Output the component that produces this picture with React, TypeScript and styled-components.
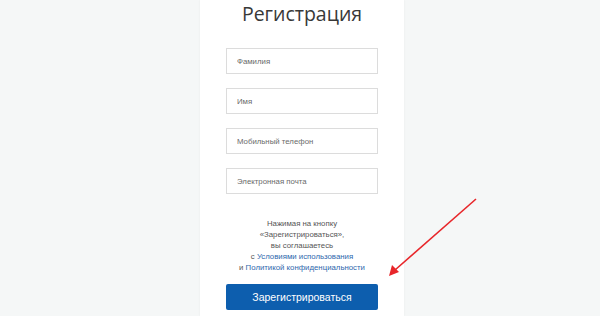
import styled, { createGlobalStyle } from "styled-components"

const Global = createGlobalStyle`
    html, body {
        margin: 0;
        padding: 0;
        background: #f5f7f7;
    }
    body {
        font-family: "Liberation Sans", Arial, sans-serif;
    }
`

const Page = styled.div`
    position: relative;
    width: 600px;
    height: 316px;
    overflow: hidden;
    display: flex;
    padding-left: 200px;
    box-sizing: border-box;
`

const Card = styled.div`
    width: 204px;
    height: 316px;
    background: #ffffff;
    box-shadow: 0 0 2px rgba(0, 0, 0, 0.06);
    display: flex;
    flex-direction: column;
    align-items: center;
    box-sizing: border-box;
`

const Title = styled.h1`
    margin: 0;
    height: 48px;
    font-family: "Open Sans", sans-serif;
    font-weight: 400;
    font-size: 19.5px;
    line-height: 28px;
    color: #383838;
`

const Fields = styled.div`
    display: flex;
    flex-direction: column;
    gap: 14px;
`

const Field = styled.input`
    width: 152px;
    height: 26px;
    box-sizing: border-box;
    border: 1px solid #dcdcdc;
    border-radius: 0;
    padding: 0 10px;
    font-family: "Liberation Sans", Arial, sans-serif;
    font-size: 7.8px;
    color: #333;
    outline: none;
    &::placeholder {
        color: #6a6a6a;
    }
`

const Terms = styled.p`
    margin: 24px 0 0;
    font-size: 7.8px;
    line-height: 11px;
    color: #555;
    text-align: center;
`

const Link = styled.a`
    color: #2e67ad;
    text-decoration: none;
`

const Submit = styled.button`
    margin-top: 11px;
    width: 152px;
    height: 26px;
    border: none;
    border-radius: 2px;
    background: #0d5eae;
    color: #ffffff;
    font-family: "Liberation Sans", Arial, sans-serif;
    font-size: 10.5px;
`

const Arrow = styled.svg`
    position: absolute;
    left: 0;
    top: 0;
    pointer-events: none;
`

export default function App() {
    return (
        <Page>
            <Global />
            <Card>
                <Title>Регистрация</Title>
                <Fields>
                    <Field placeholder="Фамилия" />
                    <Field placeholder="Имя" />
                    <Field placeholder="Мобильный телефон" />
                    <Field placeholder="Электронная почта" />
                </Fields>
                <Terms>
                    Нажимая на кнопку
                    <br />
                    «Зарегистрироваться»,
                    <br />
                    вы соглашаетесь
                    <br />
                    с <Link href="#">Условиями использования</Link>
                    <br />
                    и <Link href="#">Политикой конфиденциальности</Link>
                </Terms>
                <Submit>Зарегистрироваться</Submit>
            </Card>
            <Arrow width="600" height="316" viewBox="0 0 600 316">
                <line x1="476" y1="199" x2="395" y2="270" stroke="#e8262a" strokeWidth="1.6" />
                <polygon points="389,276 392,265 399,272" fill="#e8262a" />
            </Arrow>
        </Page>
    )
}
